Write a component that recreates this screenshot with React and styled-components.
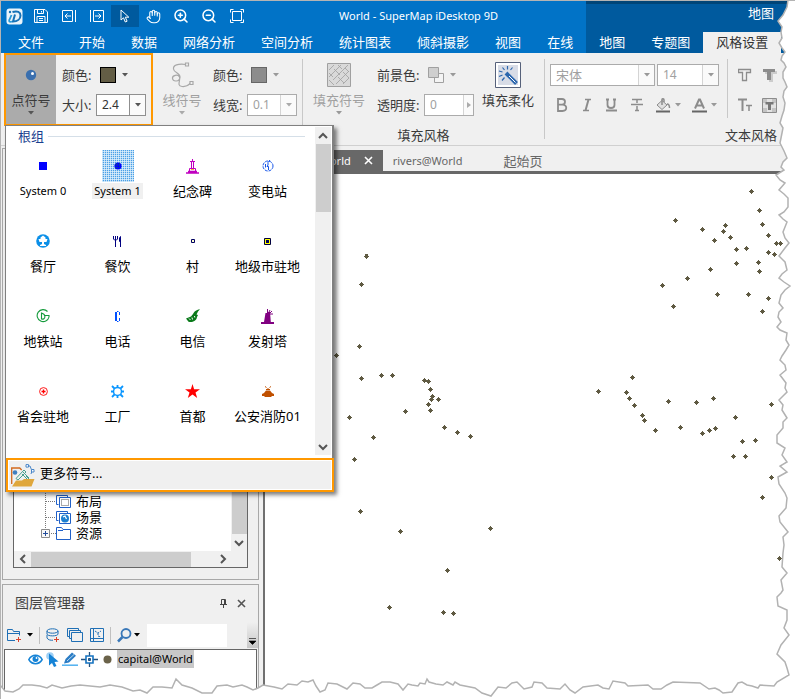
import React from 'react';
import styled, { createGlobalStyle } from 'styled-components';
import { Hand, ZoomIn, ZoomOut } from 'lucide-react';

const GlobalStyle = createGlobalStyle`
  *, *::before, *::after { box-sizing: border-box; }
  html, body { margin: 0; background: #fff; }
  body, button, input, select {
    font-family: 'Noto Sans', 'Noto Sans CJK SC', sans-serif;
    font-size: 13px;
    line-height: 18px;
    color: #3a3a3a;
  }
  button, input, select { margin: 0; padding: 0; border: 0; background: none; border-radius: 0; }
  svg { display: block; flex: none; }
`;

/* ---------- window ---------- */

const Window = styled.div`
  position: relative;
  display: flex;
  flex-direction: column;
  min-width: 795px;
  min-height: 100vh;
  overflow: hidden;
  background: #f0f0f0;
  border-top: 1px solid #b4b4b4;
  border-left: 1px solid #b4b4b4;
`;

const Header = styled.header`
  display: flex;
  height: 52px;
  background: #0173c7;
`;

const HeaderMain = styled.div`
  flex: 1;
  display: flex;
  flex-direction: column;
  justify-content: space-between;
`;

const QuickBar = styled.div`
  display: flex;
  align-items: center;
  height: 30px;
`;

const Logo = styled.div`
  width: 26px;
  padding-left: 5px;
`;

const QuickButton = styled.button`
  display: flex;
  align-items: center;
  justify-content: center;
  width: 28px;
  height: 22px;
  color: #fff;
  background: ${(p) => (p.$active ? '#005a9e' : 'transparent')};
`;

const Title = styled.h1`
  flex: 1;
  margin: 0;
  color: #fff;
  font-size: 11px;
  font-weight: 400;
  text-align: center;
`;

const Tabs = styled.nav`
  display: flex;
  height: 21px;
`;

const Tab = styled.button`
  padding: 0 13px;
  line-height: 21px;
  white-space: nowrap;
  color: ${(p) => (p.$active ? '#333' : '#fff')};
  background: ${(p) => (p.$active ? '#f0f0f0' : 'transparent')};
`;

const FileTab = styled(Tab)`
  margin: 0 9px 0 4px;
`;

const HeaderContext = styled.div`
  display: flex;
  flex-direction: column;
  justify-content: space-between;
  width: 209px;
  background: #005a9e;
  border-top: 3px solid #004578;
`;

const ContextTitle = styled.div`
  padding-right: 21px;
  color: #fff;
  text-align: right;
`;

/* ---------- ribbon ---------- */

const Ribbon = styled.section`
  display: flex;
  height: 93px;
  border-bottom: 1px solid #d0d0d0;
  padding-left: 3px;
`;

const Group = styled.div`
  display: flex;
  flex-direction: column;
  width: ${(p) => p.$width}px;
`;

const LastGroup = styled(Group)`
  flex: 1;
`;

const PointGroup = styled.div`
  position: relative;
  z-index: 5;
  width: 149px;
  height: 73px;
  border: 2px solid #ff9800;
  display: flex;
`;

const GroupBody = styled.div`
  display: flex;
  height: 73px;
  padding-left: ${(p) => p.$inset || 0}px;
`;

const GroupTitle = styled.div`
  text-align: center;
`;

const TextStyleTitle = styled(GroupTitle)`
  padding-left: 180px;
  text-align: left;
`;

const Separator = styled.div`
  width: 1px;
  height: ${(p) => p.$height}px;
  margin-top: 6px;
  background: #c8c8c8;
`;

const BigButton = styled.button`
  display: flex;
  flex-direction: column;
  align-items: center;
  gap: 2px;
  width: ${(p) => p.$width}px;
  height: ${(p) => (p.$pressed ? 69 : 71)}px;
  margin-top: ${(p) => (p.$pressed ? 0 : 2)}px;
  padding-top: 7px;
  white-space: nowrap;
  color: ${(p) => (p.$dim ? '#a0a0a0' : '#3a3a3a')};
  background: ${(p) => (p.$pressed ? '#ababab' : 'transparent')};
`;

const BigIcon = styled.span`
  display: flex;
  align-items: center;
  justify-content: center;
  height: 26px;
  margin-bottom: 1px;
`;

const Fields = styled.div`
  display: grid;
  grid-template-columns: ${(p) => p.$label}px auto;
  grid-template-rows: 30px 30px;
  align-items: center;
  align-content: start;
  padding: ${(p) => p.$pad};
`;

const Label = styled.label`
  white-space: nowrap;
`;

const ColorButton = styled.button`
  display: flex;
  align-items: center;
  gap: 6px;
  padding-left: 4px;
`;

const Swatch = styled.span`
  width: 16px;
  height: 16px;
  background: ${(p) => p.$color};
  border: 1px solid ${(p) => p.$edge};
`;

const Combo = styled.span`
  display: flex;
  width: ${(p) => p.$width}px;
  height: 22px;
  background: #fff;
  border: 1px solid ${(p) => (p.$dim ? '#ababab' : '#8f8f8f')};
  input, select {
    flex: 1;
    min-width: 0;
    padding-left: 5px;
    appearance: none;
    outline: 0;
    font-size: ${(p) => p.$size || 12}px;
    color: ${(p) => (p.$dim ? '#a0a0a0' : '#333')};
  }
`;

const ComboArrow = styled.button`
  display: flex;
  align-items: center;
  justify-content: center;
  width: ${(p) => p.$width || 16}px;
  border-left: 1px solid ${(p) => (p.$dim ? '#d4d4d4' : '#8f8f8f')};
  background: #fafafa;
`;

const TextStyle = styled.div`
  display: flex;
  flex-direction: column;
  width: 182px;
  padding: 11px 0 0 5px;
  gap: 8px;
`;

const TextRow = styled.div`
  display: flex;
  gap: 2px;
`;

const FormatButton = styled.button`
  display: flex;
  align-items: center;
  justify-content: center;
  gap: 4px;
  width: ${(p) => p.$width}px;
  height: 22px;
`;

const EffectGrid = styled.div`
  display: grid;
  grid-template-columns: 24px 24px;
  grid-template-rows: 22px 22px;
  row-gap: 8px;
  padding: 11px 0 0 5px;
`;

/* ---------- symbol gallery ---------- */

const Popup = styled.div`
  position: absolute;
  left: -1px;
  top: 70px;
  z-index: -1;
  width: 329px;
  height: 367px;
  display: flex;
  flex-direction: column;
  background: #fff;
  border: 1px solid #808080;
  border-right-width: 2px;
  box-shadow: 3px 3px 4px rgba(0, 0, 0, 0.5);
`;

const PopupBody = styled.div`
  flex: 1;
  display: flex;
  min-height: 0;
`;

const Gallery = styled.div`
  flex: 1;
`;

const GalleryTitle = styled.div`
  display: flex;
  align-items: center;
  gap: 4px;
  height: 20px;
  margin-bottom: 3px;
  padding: 0 10px 0 12px;
  color: #1a3f8f;
  &::after {
    content: '';
    flex: 1;
    height: 1px;
    background: #d5dfe8;
  }
`;

const SymbolGrid = styled.div`
  display: grid;
  grid-template-columns: 74px 75px 75px 75px;
  grid-auto-rows: 75px;
`;

const SymbolItem = styled.button`
  display: flex;
  flex-direction: column;
  align-items: center;
  gap: 1px;
  padding-top: 1px;
  color: #000;
  white-space: nowrap;
`;

const SymbolIcon = styled.span`
  display: flex;
  align-items: center;
  justify-content: center;
  width: 32px;
  height: 32px;
  background-color: ${(p) => (p.$selected ? '#f4fafe' : 'transparent')};
  background-image: ${(p) =>
    p.$selected
      ? 'conic-gradient(#4a9fe6 0 25%, #b9dcf6 0 50%, #d8ecfb 0 75%, #b9dcf6 0)'
      : 'none'};
  background-size: 2px 2px;
`;

const SymbolLabel = styled.span`
  padding: 0 2px;
  font-size: ${(p) => (p.$latin ? 11 : 13)}px;
  line-height: 16px;
  background: ${(p) => (p.$selected ? '#f0f0f0' : 'none')};
`;

const VScroll = styled.div`
  display: flex;
  flex-direction: column;
  align-items: center;
  width: 16px;
  margin: ${(p) => p.$margin || 0};
  background: #f0f0f0;
`;

const ScrollButton = styled.button`
  display: flex;
  align-items: center;
  justify-content: center;
  width: 17px;
  height: 17px;
`;

const Thumb = styled.div`
  width: ${(p) => p.$w};
  height: ${(p) => p.$h};
  background: #cdcdcd;
`;

const Grow = styled.div`
  flex: 1;
`;

const MoreButton = styled.button`
  display: flex;
  align-items: flex-start;
  gap: 5px;
  height: 34px;
  margin: 0 -2px -1px 0;
  padding: 4px 3px 0;
  border: 2px solid #ff9800;
  background: #f0f0f0;
  box-shadow: inset 0 0 0 1px #fff;
  color: #000;
`;

/* ---------- docks ---------- */

const Body = styled.div`
  flex: 1;
  display: flex;
`;

const Dock = styled.aside`
  display: flex;
  flex-direction: column;
  gap: 4px;
  width: 264px;
  padding: 2px 4px 0 1px;
  border-right: 2px solid #707070;
`;

const DockPanel = styled.section`
  display: flex;
  flex-direction: column;
  border: 1px solid #a8a8a8;
`;

const WorkspacePanel = styled(DockPanel)`
  height: 432px;
  padding: 70px 10px 11px 10px;
`;

const LayerPanel = styled(DockPanel)`
  flex: 1;
`;

const TreeBox = styled.div`
  flex: 1;
  display: flex;
  flex-direction: column;
  background: #fff;
  border: 1px solid #666;
`;

const TreeBody = styled.div`
  flex: 1;
  display: flex;
`;

const TreeList = styled.ul`
  flex: 1;
  display: flex;
  flex-direction: column;
  justify-content: flex-end;
  margin: 0;
  padding: 0 0 10px 26px;
  list-style: none;
`;

const TreeRow = styled.li`
  display: flex;
  align-items: center;
  height: 16px;
  gap: 5px;
  color: #000;
  line-height: 16px;
`;

const TreeMarks = styled.span`
  display: flex;
  align-items: center;
`;

const HScroll = styled.div`
  display: flex;
  align-items: center;
  height: 16px;
  padding-right: 16px;
  background: #f0f0f0;
`;

const PanelHeader = styled.div`
  display: flex;
  align-items: center;
  gap: 10px;
  height: 36px;
  padding: 0 12px;
`;

const PanelTitle = styled.h2`
  flex: 1;
  margin: 0;
  font-size: 14px;
  font-weight: 400;
  line-height: 20px;
  color: #444;
`;

const IconButton = styled.button`
  display: flex;
  align-items: center;
  gap: ${(p) => p.$gap || 0}px;
`;

const LayerBar = styled.div`
  display: flex;
  align-items: center;
  height: 28px;
  padding-left: 4px;
  gap: 7px;
`;

const BarLine = styled.span`
  width: 1px;
  height: 17px;
  margin: 0 -1px;
  background: #c0c0c0;
`;

const SearchBox = styled.input`
  width: 80px;
  height: 23px;
  background: #fff;
`;

const Overflow = styled.button`
  display: flex;
  align-items: flex-end;
  justify-content: center;
  width: 11px;
  height: 26px;
  margin-left: auto;
  padding-bottom: 3px;
  background: linear-gradient(#f0f0f0, #c8c8c8);
`;

const LayerList = styled.div`
  flex: 1;
  margin: 0 1px;
  background: #fff;
  border: 1px solid #666;
`;

const LayerRow = styled.div`
  display: flex;
  align-items: center;
  gap: 3px;
  height: 18px;
  padding-left: 23px;
`;

const LayerName = styled.span`
  padding: 0 1px;
  font-size: 11px;
  color: #000;
  background: #c8c8c8;
`;

/* ---------- map ---------- */

const Main = styled.main`
  flex: 1;
  display: flex;
  flex-direction: column;
`;

const DocTabs = styled.div`
  display: flex;
  height: 28px;
  padding-top: 4px;
  border-bottom: 3px solid #686868;
`;

const DocTab = styled.button`
  display: flex;
  align-items: center;
  gap: 13px;
  padding: ${(p) => p.$pad};
  font-size: ${(p) => p.$size || 11}px;
  color: ${(p) => (p.$active ? '#fff' : '#666')};
  background: ${(p) => (p.$active ? '#686868' : 'transparent')};
`;

const MapView = styled.div`
  flex: 1;
  background: #fff;
`;

const TornEdge = styled.svg`
  position: absolute;
  left: -1px;
  top: -1px;
  z-index: 10;
  width: calc(100% + 1px);
  height: calc(100% + 1px);
  pointer-events: none;
`;

/* ---------- drawings ---------- */

const Caret = ({ color = '#555' }) => (
  <svg width="6" height="4" viewBox="0 0 6 4"><path d="M0 0h6L3 3.5z" fill={color} /></svg>
);

const Chevron = ({ dir }) => {
  const d = { up: 'M1 7l4-4 4 4', down: 'M1 3l4 4 4-4', left: 'M7 1L3 5l4 4', right: 'M3 1l4 4-4 4' }[dir];
  return (
    <svg width="10" height="10" viewBox="0 0 10 10"><path d={d} fill="none" stroke="#555" strokeWidth="2" /></svg>
  );
};

const Cross = ({ color }) => (
  <svg width="9" height="9" viewBox="0 0 9 9"><path d="M1 1l7 7M8 1L1 8" stroke={color} strokeWidth="1.6" /></svg>
);

const quickIcons = [
  ['保存', <svg width="14" height="14" viewBox="0 0 14 14" fill="none" stroke="#fff"><path d="M1 .5h10L13.500 3v10.500H.5V.5zM3.500.5v4h6v-4M3 13.500v-6h8v6M5 9.500h4M5 11.500h4M7.500 2v1.500" /></svg>],
  ['后退', <svg width="14" height="14" viewBox="0 0 14 14" fill="none" stroke="#fff"><path d="M10.500 1.500H.5v11h10zM13.500 1v12M9 7H3M5.500 4.500L3 7l2.500 2.500" /></svg>],
  ['前进', <svg width="14" height="14" viewBox="0 0 14 14" fill="none" stroke="#fff"><path d="M3.500 1.500h10v11h-10zM.5 1v12M5 7h6M8.500 4.500L11 7l-2.500 2.500" /></svg>],
  ['选择', <svg width="10" height="14" viewBox="0 0 10 14" fill="none" stroke="#fff"><path d="M1 1v10l2.500-2.200L5.300 13l1.800-.8-1.800-4h3.500z" /></svg>],
  ['漫游', <Hand size={15} strokeWidth={1.7} />],
  ['放大', <ZoomIn size={16} strokeWidth={2.3} />],
  ['缩小', <ZoomOut size={16} strokeWidth={2.3} />],
  ['全幅显示', <svg width="14" height="14" viewBox="0 0 14 14" fill="none" stroke="#fff"><path d="M2.500 2.500h9v9h-9z" /><path d="M.5 3.500v-3h3M10.500.5h3v3M13.500 10.500v3h-3M3.500 13.500h-3v-3" /></svg>],
];

const LogoMark = () => (
  <svg width="17" height="17" viewBox="0 0 17 17">
    <rect x=".5" y=".5" width="16" height="16" rx="3" fill="#e9f4fb" />
    <path d="M6.500 4c5-1.500 8 0 8 3.500s-3 6-7.500 6L9 6.500" fill="none" stroke="#1673b8" strokeWidth="2" />
    <path d="M5.500 7L3.500 11.500c-1 2 0 3 2.500 2" fill="none" stroke="#2a9ad8" strokeWidth="1.800" />
    <circle cx="4" cy="4" r="1.200" fill="#1673b8" />
  </svg>
);

const PointIcon = () => (
  <svg width="12" height="12" viewBox="0 0 12 12"><circle cx="6" cy="6" r="5.200" fill="#3a6fae" /><circle cx="7.500" cy="4.500" r="1.500" fill="#fff" /></svg>
);

const LineIcon = () => (
  <svg width="24" height="26" viewBox="0 0 24 26" fill="none" stroke="#a8a8a8" strokeWidth="1.200">
    <path d="M16 2.500C8 1.500 3 3 3.500 7s7 4 6.500 8.500S3 20 2.500 16.500 8 12 9.500 15 6 24 12 24.500s6.500-1.500 8.500-3.500" />
    <path d="M15.500 1h3v3h-3zM20 19.500h3v3h-3z" fill="#f0f0f0" />
  </svg>
);

const FillIcon = () => (
  <svg width="24" height="24" viewBox="0 0 24 24" fill="none" stroke="#a0a0a0">
    <path d="M.5.5h23v23H.5z" fill="#d9d9d9" />
    <path d="M2 7l5-5M2 14L14 2M6 17L21 2M9 21L22 8M16 21l6-6M2 10l4 4M2 17l5 5M7 6l6 6M11 2l4 4M11 14l6 6M16 9l6 6M18 5l4 4" strokeWidth=".8" />
  </svg>
);

const ForeIcon = () => (
  <svg width="16" height="16" viewBox="0 0 16 16"><path d="M6.500 6.500h9v9h-9z" fill="#f4f4f4" stroke="#a0a0a0" /><path d="M.5.5h10v10H.5z" fill="#cfcfcf" stroke="#a0a0a0" /></svg>
);

const WandIcon = () => (
  <svg width="26" height="26" viewBox="0 0 26 26">
    <path d="M.5.5h25v25H.5z" fill="#fff" stroke="#56617a" />
    <path d="M3 3h20v20H3z" fill="#d8dce6" />
    <path d="M11 11l10.500 10.500" stroke="#2b66ad" strokeWidth="4" />
    <path d="M14 14l6.500 6.500" stroke="#fff" strokeWidth="1" />
    <path d="M12.500 4v3.500M7.500 5.500l2 2.500M17.500 5.500L15.500 8M4 9l3.500 1M4 14.500l3.500-1.500M7 18.500l2.500-3" stroke="#2b66ad" strokeWidth="1.200" />
  </svg>
);

const G = '#8c8c8c';
const formatIcons = [
  ['加粗', <svg width="12" height="14" viewBox="0 0 12 14" fill="none" stroke={G} strokeWidth="1.800"><path d="M2 1v12h4.500c5 0 5-6.300 0-6.300H2h4c4 0 4-5.700 0-5.700z" /></svg>],
  ['倾斜', <svg width="12" height="14" viewBox="0 0 12 14" fill="none" stroke={G} strokeWidth="1.500"><path d="M4 1.500h6M2 12.500h6" /><path d="M7.500 1.500l-3 11" strokeWidth="2" /></svg>],
  ['下划线', <svg width="13" height="14" viewBox="0 0 13 14" fill="none" stroke={G} strokeWidth="1.800"><path d="M2.500 1v6c0 4 7 4 7 0V1M1 12.500h11M1 1.500h3M8 1.500h3" /></svg>],
  ['删除线', <svg width="14" height="14" viewBox="0 0 14 14" fill="none" stroke={G} strokeWidth="1.500"><path d="M2 1.500h10M1 6.500h12M7 2v3M7 8v5M5 12.500h4" /></svg>],
];

const BucketIcon = () => (
  <svg width="16" height="15" viewBox="0 0 16 15" fill="none" stroke={G}>
    <path d="M7 2.500L12 7l-5 4.500L2 7z" fill="#e0e0e0" /><path d="M7 7V1.500C7 .5 9 .5 9 2v2M12 6c2 0 2.500 1 2.500 4" strokeWidth="1.500" />
    <path d="M1 13.500h14" stroke="#666" strokeWidth="2" />
  </svg>
);

const FontColorIcon = () => (
  <svg width="15" height="15" viewBox="0 0 15 15" fill="none" stroke={G}>
    <path d="M3 10.500L7 1.500h1l4 9M4.500 7.500h6" strokeWidth="2" /><path d="M0 13.500h15" stroke="#666" strokeWidth="2" />
  </svg>
);

const effectIcons = [
  ['轮廓', <svg width="14" height="14" viewBox="0 0 14 14" fill="none" stroke={G}><path d="M.5 1.500h12v3h-4v8h-4v-8h-4z" strokeWidth="1.300" /></svg>],
  ['阴影', <svg width="15" height="14" viewBox="0 0 15 14"><path d="M3 3h12v3h-4v8H7V6H3z" fill="#ccc" /><path d="M1 1h12v3H9v8H5V4H1z" fill={G} /></svg>],
  ['字号', <svg width="15" height="14" viewBox="0 0 15 14" fill="none" stroke={G}><path d="M0 1.500h9M4.500 1v12" strokeWidth="2" /><path d="M8 7.500h6M11 7v6" strokeWidth="1.500" /></svg>],
  ['背景', <svg width="15" height="15" viewBox="0 0 15 15"><path d="M.5.5h14v14H.5z" fill="#e2e2e2" stroke={G} /><path d="M1 1h4v4H1zM10 1h4v4h-4zM1 10h4v4H1zM10 10h4v4h-4z" fill="#c4c4c4" /><path d="M3.500 4h8v2.500H9V12H6V6.500H3.500z" fill="#777" /></svg>],
];

const symbols = [
  ['System 0', <svg width="8" height="8" viewBox="0 0 8 8"><path d="M0 0h8v8H0z" fill="#00f" /></svg>],
  ['System 1', <svg width="8" height="8" viewBox="0 0 8 8"><circle cx="4" cy="4" r="3.600" fill="#00f" /><path d="M2.500 1v6M5.500 1v6M1 2.500h6M1 5.500h6" stroke="#0a3f9c" strokeDasharray="1 1" /></svg>],
  ['纪念碑', <svg width="13" height="15" viewBox="0 0 13 15" fill="none" stroke="#c000c0"><path d="M6.500 0v3M4 2.500h5M5.500 3v6M7.500 3v6M3.500 9.500h6v3M3.500 9.500v3" /><path d="M0 14h13M2 12.500h9" strokeWidth="1.500" /><path d="M5 10.500h3" stroke="#f3b040" /></svg>],
  ['变电站', <svg width="12" height="12" viewBox="0 0 12 12" fill="none" stroke="#1555ea"><circle cx="6" cy="6" r="5" strokeDasharray="3 1" /><path d="M8 0L6 2.500V5L5 6.500h1.500V10M3.500 4v3.500" /></svg>],
  ['餐厅', <svg width="14" height="14" viewBox="0 0 14 14"><circle cx="7" cy="7" r="6.800" fill="#0a8fe8" /><path d="M7 1.500l2.500 2v1.500h2L10.500 8H8v2l2 1v1H4v-1l2-1V8H3.500l-1-3h2V3.500z" fill="#fff" /></svg>],
  ['餐饮', <svg width="9" height="11" viewBox="0 0 9 11" fill="none" stroke="#000080"><path d="M.5 0v3l1 1h2l1-1V0M2.500 0v11M7.500 11V.5L6.500 2v3.500h1" /></svg>],
  ['村', <svg width="4" height="4" viewBox="0 0 4 4"><path d="M.5.5h3v3h-3z" fill="#ffc" stroke="#000060" /></svg>],
  ['地级市驻地', <svg width="7" height="7" viewBox="0 0 7 7"><path d="M.5.5h6v6h-6z" fill="#ff0" stroke="#000040" /><path d="M2 2h3v3H2z" fill="#000060" /></svg>],
  ['地铁站', <svg width="14" height="14" viewBox="0 0 14 14" fill="none" stroke="#159b3c"><path d="M11.500 2.500A6 6 0 1 0 13 8V6.500H9M5.500 4v6c4 1 5-4.500 0-6z" strokeWidth="1.100" /></svg>],
  ['电话', <svg width="5" height="11" viewBox="0 0 5 11" fill="none" stroke="#0050ff"><path d="M1 1v9" strokeWidth="2" /><path d="M2 .5h1.500M2 10.500h1.500M4.500 1v3M4.500 7v3" /></svg>],
  ['电信', <svg width="14" height="14" viewBox="0 0 14 14"><path d="M14 .3C9.500 1 8.500 2.500 7 5L5 7.500 0 9.500l2.500 3.300c4 .8 8-.8 8.500-4.800l1-2-1.500-.5L12 2.500z" fill="#0a7a1a" /><path d="M3 9.500l1.500 1.500M6 8.500l.5 2M8.500 7l.3 1.500" stroke="#fff" /></svg>],
  ['发射塔', <svg width="13" height="15" viewBox="0 0 13 15"><path d="M6 0h1v3h2l.8 10H13v2H0v-2h3L4.500 4H6z" fill="#800080" /><path d="M9 4l2-2M9 5h3M8 3l1-2" stroke="#800080" /></svg>],
  ['省会驻地', <svg width="9" height="9" viewBox="0 0 9 9"><circle cx="4.500" cy="4.500" r="3.900" fill="none" stroke="#f00" strokeWidth=".9" /><path d="M4.500 2.500v4M2.500 4.500h4" stroke="#f00" strokeWidth="1.300" /></svg>],
  ['工厂', <svg width="13" height="13" viewBox="0 0 13 13" fill="none" stroke="#0a96ff"><circle cx="6.500" cy="6.500" r="4" strokeWidth="1.500" /><path d="M6.500 0v2M6.500 11v2M0 6.500h2M11 6.500h2M1 1l2.500 2.500M9.500 9.500L12 12M12 1L9.500 3.500M3.500 9.500L1 12" strokeWidth="1.800" /></svg>],
  ['首都', <svg width="15" height="14" viewBox="0 0 15 14"><path d="M7.500 0l1.600 5.200H15L10.500 8.500 12.200 14 7.500 10.600 2.800 14l1.700-5.500L0 5.200h5.900z" fill="#f00" /></svg>],
  ['公安消防01', <svg width="12" height="11" viewBox="0 0 12 11"><path d="M2 7l2-2.500h4L10 7l2 1v2h-2l-1 1H3l-1-1H0V8z" fill="#c05000" /><path d="M3 .5l1.500 1M9 .5l-1.500 1M6 2v2M4 3.500h4" stroke="#c05000" /></svg>],
];

const FolderSymbols = () => (
  <svg width="24" height="23" viewBox="0 0 24 23" fill="none">
    <path d="M.7 20V4h8l2 2" stroke="#d2691e" strokeWidth="1.300" /><circle cx="4" cy="8.500" r="2.300" fill="#3f7fc0" />
    <path d="M5 14.500L13 6l2 2-8 8zM15 12l3 3M12 8l6 6M11 10l5 5" stroke="#4aa090" /><path d="M16 2h3l2 5-1 3" stroke="#4a86c8" />
    <path d="M15 .6h2.500v2.500H15zM20.500 5.500H23V8h-2.500z" fill="#fff" stroke="#4a86c8" />
    <path d="M1 22.500l4-6h6l2-1.500h10.500l-3 7.500z" fill="#dfa73c" />
  </svg>
);

const TreeIcon = ({ kind }) => (
  <svg width="15" height="13" viewBox="0 0 15 13" fill="none" stroke="#2060c8">
    {kind === 'folder' ? (
      <path d="M.5 12.500v-12h5l1.500 2h7.500v10zM2 3.500h5" />
    ) : (
      <>
        <path d="M2.500 9.500h-2v-9h11v2" /><path d="M3.500 2.500h11v10h-11z" fill="#fff" />
        {kind === 'scene'
          ? <><circle cx="9" cy="7.500" r="4" fill="#1d7fd0" stroke="none" /><path d="M7 6l2-1 1.500 3" stroke="#fff" strokeWidth="1.200" /></>
          : <path d="M5.500 4.500h7v6h-7z" stroke="#555" strokeDasharray="1 1" />}
      </>
    )}
  </svg>
);

const Branch = ({ plus }) => (
  <svg width="16" height="16" viewBox="0 0 16 16">
    <path d={plus ? 'M5.500 0v8M5 8.500h11' : 'M5.500 0v16M6 8.500h10'} stroke="#777" strokeDasharray="1 1" />
    {plus && <><path d="M1.500 4.500h8v8h-8z" fill="#f8f8f8" stroke="#8a8a8a" /><path d="M3 8.500h5M5.500 6v5" stroke="#234c9a" /></>}
  </svg>
);

const B = '#1f6fb5';
const NewFolder = () => <svg width="15" height="15" viewBox="0 0 15 15" fill="none" stroke={B}><path d="M8 12.500H.5v-11h5l1 2h6v4M1 5.500h11" /><path d="M11.500 9v5M9 11.500h5" stroke="#d9412b" /></svg>;
const Database = () => <svg width="14" height="15" viewBox="0 0 14 15" fill="none" stroke={B}><ellipse cx="6.500" cy="3" rx="5.500" ry="2.200" /><path d="M1 3v3c0 2.500 11 2.500 11 0V3M1 7v3c1 2 4 2.500 6 2.200" /><path d="M10.500 9v5M8 11.500h5" stroke="#d9412b" /></svg>;
const Stack = () => <svg width="16" height="14" viewBox="0 0 16 14" fill="none" stroke={B}><path d="M2 8.500H.5v-8h11V2M4 10.500H2.500v-8h11V4M4.500 4.500h11v9h-11z" /></svg>;
const MapGrid = () => <svg width="14" height="14" viewBox="0 0 14 14" fill="none" stroke={B}><path d="M.5.5h13v13H.5zM3.500 1v12M1 10.500h12" /><path d="M5 3l3 2 3-2M8 5v3l3 1" strokeDasharray="2 1" /></svg>;
const Lens = () => <svg width="15" height="15" viewBox="0 0 15 15" fill="none" stroke="#3a78b8"><circle cx="9" cy="5.500" r="4.500" strokeWidth="1.800" /><path d="M5.500 9L1 13.500" strokeWidth="2.500" /></svg>;
const Pin = () => <svg width="7" height="9" viewBox="0 0 7 9" fill="none" stroke="#444"><path d="M1.500 5V.5h4V5M0 5.500h7M3.500 6v3M4.500 1v4" /></svg>;

const Eye = () => <svg width="15" height="11" viewBox="0 0 15 11"><path d="M.8 5.500C4-.2 11-.2 14.200 5.500 11 11 4 11 .8 5.500z" fill="#fff" stroke="#1583d6" strokeWidth="1.500" /><circle cx="7.500" cy="5" r="3" fill="#1583d6" /><circle cx="8.500" cy="4" r=".9" fill="#fff" /></svg>;
const Pick = () => <svg width="13" height="15" viewBox="0 0 13 15"><circle cx="4" cy="4" r="3.800" fill="#9fd0f5" /><path d="M3 1.500l9.500 8-4 .5 2 4-2.500 1-2-4-3 2.500z" fill="#1583d6" /></svg>;
const Pencil = () => <svg width="16" height="14" viewBox="0 0 16 14"><path d="M2 11.500L3.500 7 10 .5l4 3.300L7 10.500z" fill="#2b7cc4" /><path d="M5 9L12 2.500" stroke="#b9dcf5" /><path d="M0 13.200h16" stroke="#4fb0f0" strokeWidth="1.500" /></svg>;
const Node = () => <svg width="17" height="15" viewBox="0 0 17 15" fill="none" stroke="#24527e"><path d="M8.500 0v15M0 7.500h17" strokeWidth="1.300" /><path d="M5 4h7v7H5z" fill="#fff" stroke="#1673c0" strokeWidth="1.600" /><path d="M7.500 6.500h2v2h-2z" fill="#1673c0" /></svg>;
const LayerDot = () => <svg width="13" height="9" viewBox="0 0 13 9"><circle cx="6.500" cy="4.500" r="4" fill="#6b634a" /></svg>;

const points = [
  [366, 256], [361, 284], [359, 346], [336, 355], [361, 378], [381, 375], [392, 375], [424, 380], [428, 381], [430, 389],
  [432, 396], [431, 399], [438, 399], [428, 404], [430, 410], [405, 411], [349, 417], [373, 437], [354, 459], [444, 427],
  [457, 432], [470, 436], [360, 511], [400, 531], [490, 528], [447, 570], [389, 607], [443, 612], [453, 613],
  [751, 191], [759, 210], [675, 220], [702, 229], [725, 225], [723, 231], [730, 237], [714, 240], [762, 224], [768, 235],
  [776, 243], [780, 243], [768, 252], [774, 254], [736, 249], [746, 248], [736, 263], [758, 262], [759, 271], [710, 269],
  [687, 278], [662, 285], [673, 306], [717, 294], [748, 294], [768, 298], [762, 311],
  [632, 377], [598, 391], [626, 392], [629, 398], [634, 405], [642, 415], [644, 420], [655, 430], [668, 401], [680, 427],
  [696, 402], [713, 398], [702, 433], [709, 430], [715, 428], [735, 417], [742, 441], [755, 440], [733, 456], [745, 456],
  [771, 404], [771, 477], [762, 497], [779, 558],
];

const tornRight = '788,0 787,7 783,15 778,21 782,27 781,32 782,38 779,43 782,48 785,52 782,56 781,60 784,63 786,67 783,72 783,78 785,82 787,87 784,91 783,97 785,103 784,110 782,116 780,123 783,128 782,133 781,138 780,143 784,151 787,158 783,162 781,167 784,170 776,175 780,180 785,183 779,190 784,194 788,198 788,207 784,212 779,215 783,219 787,222 785,227 783,232 785,238 789,243 785,248 779,256 783,260 785,262 787,270 782,274 779,278 784,282 790,286 785,290 781,295 779,303 783,308 779,312 778,317 781,322 777,327 780,330 787,333 786,340 789,345 786,350 782,356 780,360 785,365 786,370 780,375 783,379 786,383 785,388 787,392 783,396 779,400 783,405 782,410 787,418 783,422 783,428 777,435 777,443 785,448 782,455 787,462 780,466 787,472 778,477 779,484 785,493 787,498 786,508 779,516 780,522 788,532 783,537 784,545 783,553 782,567 787,573 781,580 783,590 781,593 777,597 778,606 787,610 787,620 784,628 789,635 785,640 781,645 777,654 785,662 787,668 789,675';
const tornBottom = '777,682 774,686 760,685 758,688 752,686 747,685 742,682 738,683 732,692 723,693 719,690 715,688 709,689 700,683 673,682 667,685 661,689 653,689 648,685 628,686 625,683 613,681 609,689 603,688 598,685 583,687 575,693 570,690 565,684 560,689 547,688 542,683 534,682 532,687 524,689 517,682 512,683 506,688 498,687 491,696 482,693 475,688 460,685 455,682 453,685 447,682 443,685 436,684 429,682 427,679 425,684 420,683 418,686 412,685 408,684 403,690 398,684 390,682 382,682 377,685 372,688 365,688 360,684 353,683 347,689 337,684 328,683 325,690 320,692 316,686 313,680 308,682 302,681 297,685 288,684 282,689 274,687 263,685 258,688 253,690 247,687 242,685 233,687 227,685 217,686 212,693 202,693 192,688 182,685 176,679 172,688 162,687 153,687 147,693 140,690 133,691 122,687 110,685 100,687 90,686 80,685 71,686 62,688 52,685 47,688 40,686 32,685 23,685 19,689 13,692 5,691 0,685';

/* ---------- app ---------- */

function SymbolPopup() {
  return (
    <Popup>
      <PopupBody>
        <Gallery>
          <GalleryTitle>根组</GalleryTitle>
          <SymbolGrid>
            {symbols.map(([name, icon], i) => (
              <SymbolItem key={name}>
                <SymbolIcon $selected={i === 1}>{icon}</SymbolIcon>
                <SymbolLabel $latin={i < 2} $selected={i === 1}>{name}</SymbolLabel>
              </SymbolItem>
            ))}
          </SymbolGrid>
        </Gallery>
        <VScroll $margin="1px 1px 3px 0">
          <ScrollButton aria-label="向上"><Chevron dir="up" /></ScrollButton>
          <Thumb $w="15px" $h="68px" />
          <Grow />
          <ScrollButton aria-label="向下"><Chevron dir="down" /></ScrollButton>
        </VScroll>
      </PopupBody>
      <MoreButton><FolderSymbols />更多符号...</MoreButton>
    </Popup>
  );
}

export default function App() {
  return (
    <Window>
      <GlobalStyle />
      <Header>
        <HeaderMain>
          <QuickBar>
            <Logo><LogoMark /></Logo>
            {quickIcons.map(([name, icon], i) => (
              <QuickButton key={name} aria-label={name} $active={i === 3}>{icon}</QuickButton>
            ))}
            <Title>World - SuperMap iDesktop 9D</Title>
          </QuickBar>
          <Tabs>
            <FileTab>文件</FileTab>
            {['开始', '数据', '网络分析', '空间分析', '统计图表', '倾斜摄影', '视图', '在线'].map((t) => <Tab key={t}>{t}</Tab>)}
          </Tabs>
        </HeaderMain>
        <HeaderContext>
          <ContextTitle>地图</ContextTitle>
          <Tabs>
            <Tab>地图</Tab>
            <Tab>专题图</Tab>
            <Tab $active>风格设置</Tab>
          </Tabs>
        </HeaderContext>
      </Header>

      <Ribbon>
        <PointGroup>
          <BigButton $width={50} $pressed>
            <BigIcon><PointIcon /></BigIcon>点符号<Caret />
          </BigButton>
          <Fields $label={34} $pad="5px 0 0 6px">
            <Label htmlFor="pc">颜色:</Label>
            <ColorButton id="pc"><Swatch $color="#635d45" $edge="#000" /><Caret /></ColorButton>
            <Label htmlFor="ps">大小:</Label>
            <Combo $width={50}>
              <input id="ps" defaultValue="2.4" />
              <ComboArrow aria-label="展开大小"><Caret /></ComboArrow>
            </Combo>
          </Fields>
          <SymbolPopup />
        </PointGroup>

        <Group $width={149}>
          <GroupBody $inset={4}>
            <BigButton $width={50} $dim>
              <BigIcon><LineIcon /></BigIcon>线符号<Caret color="#aaa" />
            </BigButton>
            <Fields $label={34} $pad="7px 0 0 6px">
              <Label htmlFor="lc">颜色:</Label>
              <ColorButton id="lc"><Swatch $color="#8c8c8c" $edge="#666" /><Caret color="#999" /></ColorButton>
              <Label htmlFor="lw">线宽:</Label>
              <Combo $width={50} $dim>
                <input id="lw" defaultValue="0.1" />
                <ComboArrow $dim aria-label="展开线宽"><Caret color="#aaa" /></ComboArrow>
              </Combo>
            </Fields>
          </GroupBody>
        </Group>
        <Separator $height={80} />

        <Group $width={241}>
          <GroupBody $inset={6}>
            <BigButton $width={60} $dim>
              <BigIcon><FillIcon /></BigIcon>填充符号<Caret color="#999" />
            </BigButton>
            <Fields $label={47} $pad="7px 0 0 8px">
              <Label htmlFor="fc">前景色:</Label>
              <ColorButton id="fc"><ForeIcon /><Caret color="#999" /></ColorButton>
              <Label htmlFor="fo">透明度:</Label>
              <Combo $width={50} $dim>
                <input id="fo" defaultValue="0" />
                <ComboArrow $dim $width={10} aria-label="调整透明度">
                  <svg width="4" height="6" viewBox="0 0 4 6"><path d="M0 0v6l4-3z" fill="#aaa" /></svg>
                </ComboArrow>
              </Combo>
            </Fields>
            <BigButton $width={68}>
              <BigIcon><WandIcon /></BigIcon>填充柔化
            </BigButton>
          </GroupBody>
          <GroupTitle>填充风格</GroupTitle>
        </Group>
        <Separator $height={80} />

        <LastGroup>
          <GroupBody>
            <TextStyle>
              <TextRow>
                <Combo $width={105} $dim $size={13}>
                  <select aria-label="字体"><option>宋体</option></select>
                  <ComboArrow $dim aria-label="展开字体"><Caret color="#999" /></ComboArrow>
                </Combo>
                <Combo $width={62} $dim>
                  <select aria-label="字号"><option>14</option></select>
                  <ComboArrow $dim aria-label="展开字号"><Caret color="#999" /></ComboArrow>
                </Combo>
              </TextRow>
              <TextRow>
                {formatIcons.map(([name, icon]) => <FormatButton key={name} $width={23} aria-label={name}>{icon}</FormatButton>)}
                <FormatButton $width={35} aria-label="填充颜色"><BucketIcon /><Caret color="#999" /></FormatButton>
                <FormatButton $width={35} aria-label="文字颜色"><FontColorIcon /><Caret color="#999" /></FormatButton>
              </TextRow>
            </TextStyle>
            <Separator $height={59} />
            <EffectGrid>
              {effectIcons.map(([name, icon]) => <FormatButton key={name} $width={24} aria-label={name}>{icon}</FormatButton>)}
            </EffectGrid>
          </GroupBody>
          <TextStyleTitle>文本风格</TextStyleTitle>
        </LastGroup>
      </Ribbon>

      <Body>
        <Dock>
          <WorkspacePanel>
            <TreeBox>
              <TreeBody>
                <TreeList>
                  <TreeRow><TreeMarks><Branch /><TreeIcon /></TreeMarks>布局</TreeRow>
                  <TreeRow><TreeMarks><Branch /><TreeIcon kind="scene" /></TreeMarks>场景</TreeRow>
                  <TreeRow><TreeMarks><Branch plus /><TreeIcon kind="folder" /></TreeMarks>资源</TreeRow>
                </TreeList>
                <VScroll>
                  <Thumb $w="15px" $h="calc(100% - 17px)" />
                  <ScrollButton aria-label="向下滚动"><Chevron dir="down" /></ScrollButton>
                </VScroll>
              </TreeBody>
              <HScroll>
                <ScrollButton aria-label="向左滚动"><Chevron dir="left" /></ScrollButton>
                <Thumb $w="160px" $h="15px" />
                <Grow />
                <ScrollButton aria-label="向右滚动"><Chevron dir="right" /></ScrollButton>
              </HScroll>
            </TreeBox>
          </WorkspacePanel>

          <LayerPanel>
            <PanelHeader>
              <PanelTitle>图层管理器</PanelTitle>
              <IconButton aria-label="固定"><Pin /></IconButton>
              <IconButton aria-label="关闭"><Cross color="#555" /></IconButton>
            </PanelHeader>
            <LayerBar>
              <IconButton aria-label="新建图层组" $gap={5}><NewFolder /><Caret color="#000" /></IconButton>
              <BarLine />
              <IconButton aria-label="添加数据"><Database /></IconButton>
              <IconButton aria-label="图层"><Stack /></IconButton>
              <IconButton aria-label="地图"><MapGrid /></IconButton>
              <BarLine />
              <IconButton aria-label="查找" $gap={2}><Lens /><Caret color="#000" /></IconButton>
              <SearchBox aria-label="查找图层" />
              <Overflow aria-label="更多">
                <svg width="7" height="7" viewBox="0 0 7 7"><path d="M0 .5h7M0 3h7L3.500 6.500z" fill="#000" stroke="#000" strokeWidth=".6" /></svg>
              </Overflow>
            </LayerBar>
            <LayerList>
              <LayerRow>
                <Eye /><Pick /><Pencil /><Node /><LayerDot />
                <LayerName>capital@World</LayerName>
              </LayerRow>
            </LayerList>
          </LayerPanel>
        </Dock>

        <Main>
          <DocTabs>
            <DocTab $active $pad="0 10px 0 11px">capital@World<Cross color="#fff" /></DocTab>
            <DocTab $pad="0 10px">rivers@World</DocTab>
            <DocTab $pad="0 31px" $size={13}>起始页</DocTab>
          </DocTabs>
          <MapView>
            <svg width="520" height="500" viewBox="265 174 520 500" shapeRendering="crispEdges">
              {points.map(([x, y]) => <circle key={`${x}-${y}`} cx={x + 0.5} cy={y + 0.5} r="2.300" fill="#5f5a42" />)}
            </svg>
          </MapView>
        </Main>
      </Body>

      <TornEdge viewBox="0 0 795 699" preserveAspectRatio="none">
        <polygon points={`${tornRight} ${tornBottom} 0,699 795,699 795,0`} fill="#fff" />
        <polyline points={`${tornRight} ${tornBottom}`} fill="none" stroke="#b2b2b2" strokeWidth="1.500" vectorEffect="non-scaling-stroke" />
      </TornEdge>
    </Window>
  );
}
